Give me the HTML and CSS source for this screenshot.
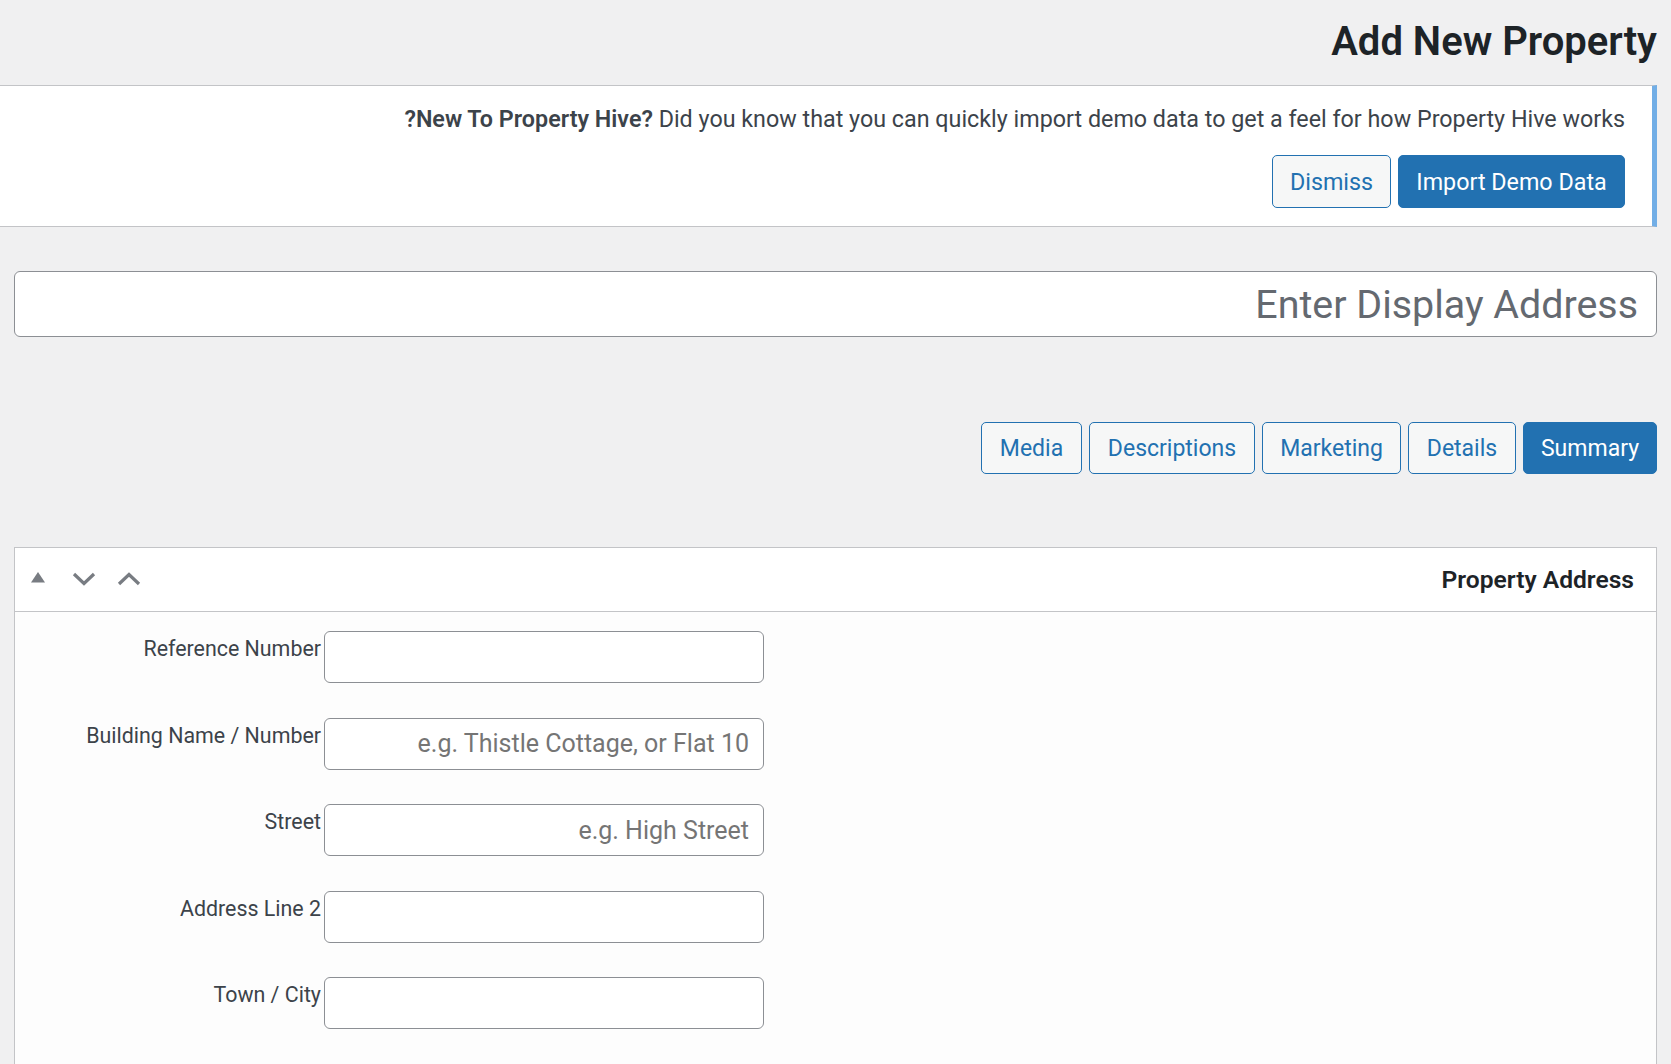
FILE: index.html
```html
<!DOCTYPE html>
<html lang="en">
<head>
<meta charset="utf-8">
<title>Add New Property</title>
<link rel="stylesheet" href="styles.css">
</head>
<body>
<div class="wrap">
  <h1 class="page-title">Add New Property</h1>

  <div class="notice">
    <p class="notice-text"><strong>?New To Property Hive?</strong> Did you know that you can quickly import demo data to get a feel for how Property Hive works</p>
    <div class="notice-actions">
      <button class="btn btn-secondary btn-dismiss">Dismiss</button>
      <button class="btn btn-primary btn-import">Import Demo Data</button>
    </div>
  </div>

  <div class="title-field">
    <input class="title-input" type="text" placeholder="Enter Display Address">
  </div>

  <div class="tabs">
    <button class="btn btn-secondary tab">Media</button>
    <button class="btn btn-secondary tab">Descriptions</button>
    <button class="btn btn-secondary tab">Marketing</button>
    <button class="btn btn-secondary tab">Details</button>
    <button class="btn btn-primary tab">Summary</button>
  </div>

  <div class="postbox">
    <div class="postbox-header">
      <div class="handle-actions">
        <span class="handle handle-sort">
          <svg width="14" height="11" viewBox="0 0 14 11"><path d="M7 0 L14 10.5 L0 10.5 Z" fill="#787c82"/></svg>
        </span>
        <span class="handle handle-down">
          <svg width="24" height="14" viewBox="0 0 24 14"><path d="M2 2 L12 11.5 L22 2" fill="none" stroke="#787c82" stroke-width="3.2"/></svg>
        </span>
        <span class="handle handle-up">
          <svg width="24" height="14" viewBox="0 0 24 14"><path d="M2 12 L12 2.5 L22 12" fill="none" stroke="#787c82" stroke-width="3.2"/></svg>
        </span>
      </div>
      <h2 class="postbox-title">Property Address</h2>
    </div>
    <div class="postbox-body">
      <div class="form-row">
        <label class="form-label">Reference Number</label>
        <input class="form-input" type="text">
      </div>
      <div class="form-row">
        <label class="form-label">Building Name / Number</label>
        <input class="form-input" type="text" placeholder="e.g. Thistle Cottage, or Flat 10">
      </div>
      <div class="form-row">
        <label class="form-label">Street</label>
        <input class="form-input" type="text" placeholder="e.g. High Street">
      </div>
      <div class="form-row">
        <label class="form-label">Address Line 2</label>
        <input class="form-input" type="text">
      </div>
      <div class="form-row">
        <label class="form-label">Town / City</label>
        <input class="form-input" type="text">
      </div>
    </div>
  </div>
</div>
</body>
</html>
```

FILE: styles.css
```css
* { box-sizing: border-box; }

html, body {
  margin: 0;
  padding: 0;
  background: #f0f0f1;
  font-family: Roboto, "Noto Sans", "Liberation Sans", sans-serif;
  color: #3c434a;
  overflow: hidden;
}

.wrap {
  padding: 0 14px 0 0;
}

.page-title {
  margin: 22px 0 0 0;
  font-size: 40px;
  line-height: 40px;
  font-weight: 600;
  color: #1d2327;
  text-align: right;
}

.notice {
  margin-top: 23px;
  background: #fff;
  border-top: 1px solid #c3c4c7;
  border-bottom: 1px solid #c3c4c7;
  border-right: 5px solid #72aee6;
  padding: 17px 27px 17px 0;
  height: 142px;
}

.notice-text {
  margin: 0;
  font-size: 23.3px;
  line-height: 33px;
  text-align: right;
  color: #3c434a;
}

.notice-text strong {
  font-weight: 600;
  color: #3c434a;
}

.notice-actions {
  margin-top: 19px;
  display: flex;
  justify-content: flex-end;
  gap: 7px;
}

.btn {
  font-family: Roboto, "Noto Sans", "Liberation Sans", sans-serif;
  font-size: 23.3px;
  height: 53px;
  border-radius: 5px;
  border: 1px solid #2271b1;
  padding: 0 12px;
  cursor: pointer;
}

.btn-secondary {
  background: #f6f7f7;
  color: #2271b1;
}

.btn-primary {
  background: #2271b1;
  color: #fff;
}

.btn-dismiss { width: 119px; }
.btn-import { width: 227px; }

.title-field {
  margin-top: 44px;
  margin-left: 14px;
}

.title-input {
  display: block;
  width: 100%;
  height: 66px;
  border: 1px solid #8c8f94;
  border-radius: 6px;
  background: #fff;
  font-family: Roboto, "Noto Sans", "Liberation Sans", sans-serif;
  font-size: 39.4px;
  padding: 0 18px;
  text-align: right;
  color: #1d2327;
}

.title-input::placeholder {
  color: #646970;
}

.tabs {
  margin-top: 85px;
  display: flex;
  justify-content: flex-end;
  gap: 7px;
}

.tab {
  height: 52px;
  font-size: 23px;
}

.tabs .tab:nth-child(1) { width: 101px; }
.tabs .tab:nth-child(2) { width: 166px; }
.tabs .tab:nth-child(3) { width: 139px; }
.tabs .tab:nth-child(4) { width: 108px; }
.tabs .tab:nth-child(5) { width: 134px; }

.postbox {
  margin-top: 73px;
  margin-left: 14px;
  background: #fdfdfd;
  border: 1px solid #c3c4c7;
  border-bottom: none;
}

.postbox-header {
  display: flex;
  align-items: center;
  justify-content: space-between;
  height: 64px;
  background: #fff;
  border-bottom: 1px solid #c3c4c7;
  padding: 0 22px 0 16px;
}

.handle-actions {
  display: flex;
  align-items: center;
}

.handle {
  display: flex;
  align-items: center;
  justify-content: center;
}

.handle-sort { width: 14px; margin-right: 27px; margin-top: -4px; }
.handle-down { width: 24px; margin-right: 21px; margin-top: -2px; }
.handle-up { width: 24px; margin-top: -2px; }

.postbox-title {
  margin: 0;
  font-size: 24.6px;
  font-weight: 600;
  color: #1d2327;
}

.postbox-body {
  padding-top: 19px;
  padding-bottom: 35px;
  display: flex;
  flex-direction: column;
  gap: 34.5px;
}

.form-row {
  display: grid;
  grid-template-columns: 306px 440px;
  column-gap: 3px;
}

.form-label {
  text-align: right;
  font-size: 21.4px;
  line-height: 28px;
  padding-top: 4px;
  color: #3c434a;
}

.form-input {
  height: 52px;
  border: 1px solid #8c8f94;
  border-radius: 6px;
  background: #fff;
  font-family: Roboto, "Noto Sans", "Liberation Sans", sans-serif;
  font-size: 25px;
  padding: 0 14px;
  text-align: right;
  color: #1d2327;
}

.form-input::placeholder {
  color: #757575;
}
```
